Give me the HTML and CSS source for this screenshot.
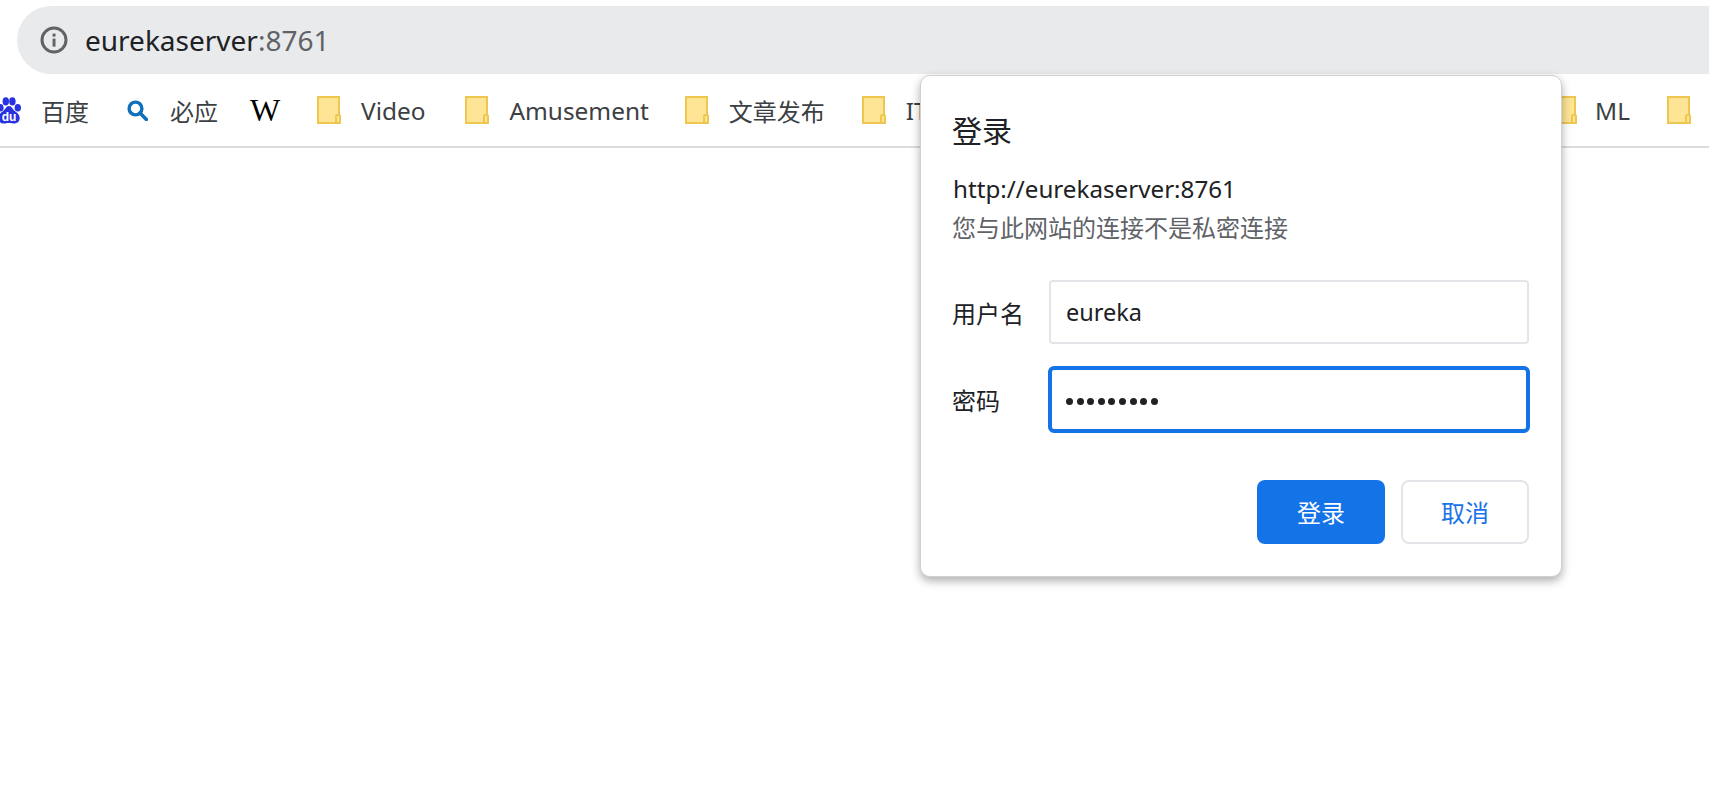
FILE: index.html
```html
<!DOCTYPE html>
<html lang="zh">
<head>
<meta charset="utf-8">
<title>登录</title>
<link rel="stylesheet" href="styles.css">
</head>
<body>
<svg class="defs" width="0" height="0">
  <symbol id="folder" viewBox="0 0 24 28">
    <path d="M1 1H22V19H24V27H1Z" fill="#fde595"/>
    <path d="M1 1H22V27H1Z" fill="none" stroke="#eec650" stroke-width="2"/>
    <path d="M19 27V20.5Q19 19 20.5 19H22.5Q23 19 23 20.5V27H19Z" fill="#fde595" stroke="#eec650" stroke-width="2"/>
  </symbol>
</svg>
<header class="chrome">
  <div class="toolbar">
    <div class="omnibox">
      <svg class="info" viewBox="0 0 28 28" width="28" height="28">
        <circle cx="14" cy="14" r="12" fill="none" stroke="#5f6368" stroke-width="3"/>
        <rect x="12.6" y="12.6" width="2.9" height="8" fill="#5f6368"/>
        <rect x="12.6" y="7.6" width="2.9" height="3" fill="#5f6368"/>
      </svg>
      <span class="host">eurekaserver</span><span class="port">:8761</span>
    </div>
  </div>
  <nav class="bookmarks">
    <a class="bm bm-baidu">
      <svg class="ico-baidu" viewBox="0 0 24 27" width="24" height="27">
        <ellipse cx="3.4" cy="10.8" rx="3.2" ry="3.8" fill="#2932e1"/>
        <ellipse cx="8.8" cy="4.4" rx="3.2" ry="4.1" fill="#2932e1"/>
        <ellipse cx="15.4" cy="4.4" rx="3.2" ry="4.1" fill="#2932e1"/>
        <ellipse cx="20.8" cy="10.8" rx="3.2" ry="3.8" fill="#2932e1"/>
        <path d="M12 9C9 9 8.4 12.5 5.6 14.6C3 16.6 .8 18.4 1.4 22.2C2 25.8 5.6 27 8.2 26.4C10 26 14 26 15.8 26.4C18.4 27 22 25.8 22.6 22.2C23.2 18.4 21 16.6 18.4 14.6C15.6 12.5 15 9 12 9Z" fill="#2932e1"/>
        <text class="du" x="12" y="24.4" text-anchor="middle">du</text>
      </svg>
      <span class="cjk">百度</span>
    </a>
    <a class="bm bm-bing">
      <svg viewBox="0 0 21 21" width="21" height="21">
        <circle cx="8.5" cy="8.5" r="6.4" fill="none" stroke="#0f6fba" stroke-width="3.4"/>
        <path d="M13 13L19.4 19.4" stroke="#0f6fba" stroke-width="3.6" stroke-linecap="round"/>
      </svg>
      <span class="cjk">必应</span>
    </a>
    <a class="bm bm-wiki"><span class="wiki">W</span></a>
    <a class="bm bm-video"><svg class="folder" width="24" height="28"><use href="#folder"/></svg><span>Video</span></a>
    <a class="bm bm-amuse"><svg class="folder" width="24" height="28"><use href="#folder"/></svg><span>Amusement</span></a>
    <a class="bm bm-post"><svg class="folder" width="24" height="28"><use href="#folder"/></svg><span class="cjk">文章发布</span></a>
    <a class="bm bm-fill"><svg class="folder" width="24" height="28"><use href="#folder"/></svg><span>IT</span></a>
    <a class="bm bm-ml"><svg class="folder" width="24" height="28"><use href="#folder"/></svg><span>ML</span></a>
    <a class="bm bm-last"><svg class="folder" width="24" height="28"><use href="#folder"/></svg></a>
  </nav>
</header>
<main class="page"></main>
<form class="dialog">
  <h1 class="title">登录</h1>
  <p class="origin">http://eurekaserver:8761</p>
  <p class="warn">您与此网站的连接不是私密连接</p>
  <div class="fields">
    <label class="label" for="user">用户名</label>
    <div class="input" id="user">eureka</div>
    <label class="label" for="pass">密码</label>
    <div class="input input-focus" id="pass"><span class="dots"><i></i><i></i><i></i><i></i><i></i><i></i><i></i><i></i><i></i></span></div>
  </div>
  <div class="actions">
    <button class="btn btn-primary" type="button">登录</button>
    <button class="btn btn-cancel" type="button">取消</button>
  </div>
</form>
</body>
</html>
```
FILE: styles.css
```css
* { box-sizing: border-box; }
html, body { margin: 0; padding: 0; height: 100%; overflow: hidden; background: #fff; }
body { font-family: "Noto Sans", "Noto Sans CJK SC", sans-serif; color: #202124; position: relative; }
.defs { position: absolute; }
.chrome { border-bottom: 2px solid #dcdcdc; height: 148px; }
.toolbar { padding: 6px 0 0 17px; height: 74px; }
.omnibox { width: 1760px; height: 68px; background: #e9eaec; border-radius: 34px; display: flex; align-items: center; padding-left: 23px; font-size: 28px; }
.info { margin-right: 17px; flex: none; }
.host { color: #202124; }
.port { color: #5f6368; }
.bookmarks { height: 72px; display: flex; align-items: center; margin-left: -4px; color: #3c4043; font-size: 24.4px; }
.bm { display: flex; align-items: center; flex: none; height: 44px; margin-right: 38px; white-space: nowrap; }
.bm svg { flex: none; margin-right: 20px; }
.bm span { padding-top: 1px; }
.cjk { font-size: 24px; }
.bm-baidu svg { margin-left: 1px; }
.bm-bing svg { margin-right: 22px; }
.bm-bing { margin-right: 32px; }
.wiki { font-family: "Liberation Serif", serif; font-size: 32px; color: #000; width: 31px; }
.bm-wiki { margin-right: 36px; }
.bm-video { margin-right: 40px; }
.bm-amuse { margin-right: 36px; }
.bm-post { margin-right: 37px; }
.bm-fill { flex: 1; }
.bm-ml { margin-right: 37px; }
.bm-ml svg { margin-right: 18px; }
.bm-last { margin-right: 18px; }
.bm-last svg { margin-right: 0; }
.du { font: 700 12px "Liberation Sans", sans-serif; fill: #fff; }
.page { height: 655px; }
.dialog { position: absolute; left: 920px; top: 75px; width: 642px; height: 502px; background: #fff; border-radius: 10px; border: 1px solid #d0d0d0; box-shadow: 0 4px 10px rgba(0,0,0,.32); padding: 27px 32px 0 31px; }
.title { margin: 0; font-size: 30px; font-weight: 400; line-height: 56px; color: #202124; }
.origin { margin: 12px 0 0 1px; font-size: 24.2px; line-height: 36px; color: #202124; }
.warn { margin: 2px 0 0; font-size: 24px; line-height: 38px; color: #5f6368; }
.fields { display: grid; grid-template-columns: 96px 1fr; row-gap: 22px; margin-top: 33px; align-items: center; font-size: 24px; }
.label { color: #202124; }
.input { height: 64px; margin-left: 1px; border: 2px solid #e4e5e8; border-radius: 4px; display: flex; align-items: center; padding-left: 15px; font-size: 23.5px; color: #202124; }
.input-focus { height: 67px; margin: 0 -1px 0 0; border: 4px solid #1473e6; border-radius: 6px; padding: 3px 0 0 14px; }
.dots { display: flex; gap: 3.6px; }
.dots i { width: 7px; height: 7px; border-radius: 50%; background: #202124; }
.actions { display: flex; justify-content: flex-end; gap: 16px; margin-top: 47px; }
.btn { width: 128px; height: 64px; border-radius: 8px; padding: 0 0 2px; font: 24px "Noto Sans CJK SC", sans-serif; cursor: pointer; }
.btn-primary { background: #1473e6; border: 0; color: #fff; }
.btn-cancel { background: #fff; border: 2px solid #e4e5e8; color: #1a73e8; }
```
